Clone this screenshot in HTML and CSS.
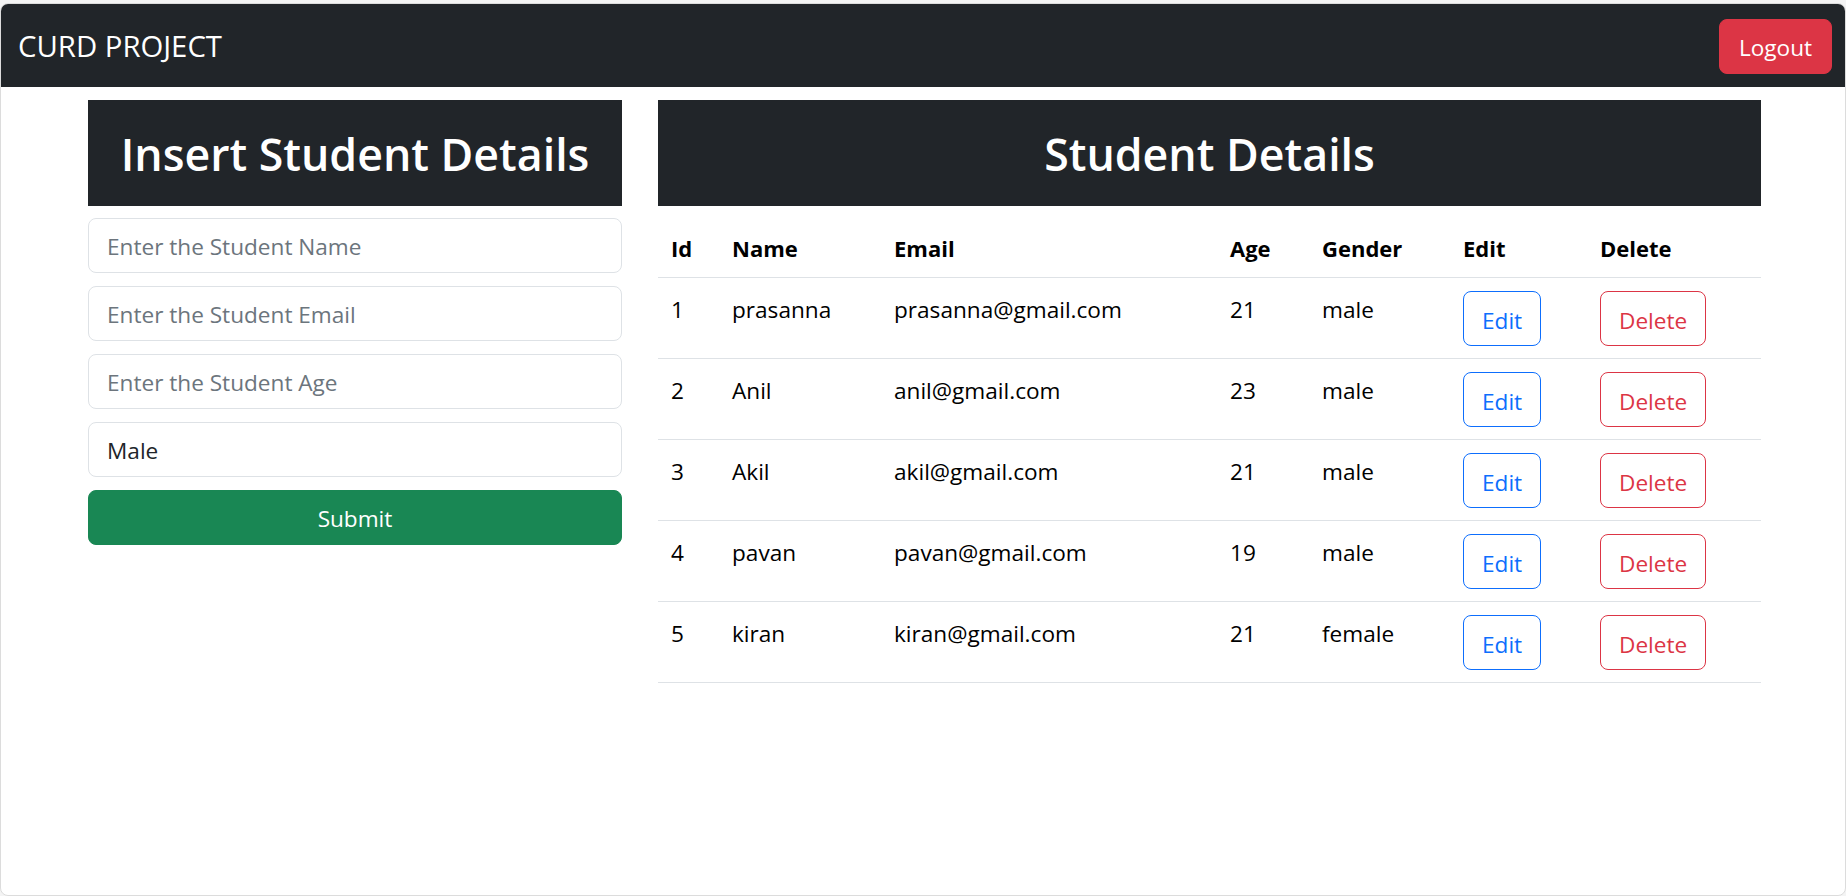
FILE: index.html
```html
<!DOCTYPE html>
<html lang="en">
<head>
<meta charset="utf-8">
<title>CURD PROJECT</title>
<link rel="stylesheet" href="styles.css">
</head>
<body>
<div class="window">
  <nav class="navbar">
    <span class="brand">CURD PROJECT</span>
    <button class="btn btn-logout" type="button">Logout</button>
  </nav>
  <main class="container">
    <section class="col-form">
      <h1 class="panel-title">Insert Student Details</h1>
      <form class="form">
        <input class="field" type="text" placeholder="Enter the Student Name">
        <input class="field" type="text" placeholder="Enter the Student Email">
        <input class="field" type="text" placeholder="Enter the Student Age">
        <select class="field field-select">
          <option>Male</option>
          <option>Female</option>
        </select>
        <button class="btn-submit" type="button">Submit</button>
      </form>
    </section>
    <section class="col-table">
      <h1 class="panel-title">Student Details</h1>
      <table class="table">
        <colgroup>
          <col class="w-id"><col class="w-name"><col class="w-email"><col class="w-age"><col class="w-gender"><col class="w-edit"><col class="w-delete">
        </colgroup>
        <thead>
          <tr><th>Id</th><th>Name</th><th>Email</th><th>Age</th><th>Gender</th><th>Edit</th><th>Delete</th></tr>
        </thead>
        <tbody>
          <tr><td>1</td><td>prasanna</td><td>prasanna@gmail.com</td><td>21</td><td>male</td><td><button class="btn btn-edit" type="button">Edit</button></td><td><button class="btn btn-delete" type="button">Delete</button></td></tr>
          <tr><td>2</td><td>Anil</td><td>anil@gmail.com</td><td>23</td><td>male</td><td><button class="btn btn-edit" type="button">Edit</button></td><td><button class="btn btn-delete" type="button">Delete</button></td></tr>
          <tr><td>3</td><td>Akil</td><td>akil@gmail.com</td><td>21</td><td>male</td><td><button class="btn btn-edit" type="button">Edit</button></td><td><button class="btn btn-delete" type="button">Delete</button></td></tr>
          <tr><td>4</td><td>pavan</td><td>pavan@gmail.com</td><td>19</td><td>male</td><td><button class="btn btn-edit" type="button">Edit</button></td><td><button class="btn btn-delete" type="button">Delete</button></td></tr>
          <tr><td>5</td><td>kiran</td><td>kiran@gmail.com</td><td>21</td><td>female</td><td><button class="btn btn-edit" type="button">Edit</button></td><td><button class="btn btn-delete" type="button">Delete</button></td></tr>
        </tbody>
      </table>
    </section>
  </main>
</div>
</body>
</html>
```

FILE: styles.css
```css
* { box-sizing: border-box; }

html, body {
  margin: 0;
  padding: 0;
  height: 100%;
}

body {
  background: #f4f4f4;
  font-family: "Open Sans", "Noto Sans", sans-serif;
  font-size: 22.6px;
  color: #212529;
  padding-top: 3px;
}

.window {
  height: 893px;
  background: #fff;
  border: 1px solid #dcdcdc;
  border-radius: 8px;
  overflow: hidden;
}

.navbar {
  height: 83px;
  background: #212529;
  display: flex;
  align-items: center;
  justify-content: space-between;
  padding: 1px 13px 0 17px;
}

.brand {
  color: #fff;
  font-size: 29.3px;
  line-height: 1;
  padding-top: 2px;
}

.btn {
  font-family: inherit;
  font-size: 22.6px;
  line-height: 33px;
  border-radius: 8px;
  border: 1px solid transparent;
  cursor: pointer;
  background: transparent;
}

.btn-logout {
  height: 55px;
  width: 113px;
  background: #dc3545;
  border-color: #dc3545;
  color: #fff;
  padding: 2px 0 0;
}

.container {
  width: 1673px;
  margin: 13px 0 0 87px;
  display: grid;
  grid-template-columns: 534px 1103px;
  column-gap: 36px;
  align-items: start;
}

.panel-title {
  margin: 0;
  height: 106px;
  background: #212529;
  color: #fff;
  font-size: 44.7px;
  font-weight: 600;
  white-space: nowrap;
  display: flex;
  align-items: center;
  justify-content: center;
}

.form {
  display: flex;
  flex-direction: column;
  gap: 13px;
  margin-top: 12px;
}

.field {
  display: block;
  width: 100%;
  height: 55px;
  border: 1px solid #dee2e6;
  border-radius: 8px;
  padding: 2px 18px 0;
  font-family: inherit;
  font-size: 22.6px;
  color: #212529;
  background: #fff;
  outline: none;
}

.field::placeholder {
  color: #6c757d;
  opacity: 1;
}

.field-select {
  appearance: none;
  -webkit-appearance: none;
}

.btn-submit {
  height: 55px;
  width: 100%;
  border: 1px solid #198754;
  border-radius: 8px;
  background: #198754;
  color: #fff;
  font-family: inherit;
  font-size: 22.6px;
  padding-top: 2px;
  cursor: pointer;
}

.table {
  width: 100%;
  margin-top: 13px;
  border-collapse: collapse;
  table-layout: fixed;
  vertical-align: top;
}

.w-id { width: 61px; }
.w-name { width: 162px; }
.w-email { width: 336px; }
.w-age { width: 92px; }
.w-gender { width: 141px; }
.w-edit { width: 137px; }
.w-delete { width: 174px; }

.table th,
.table td {
  text-align: left;
  padding: 12px 13px;
  line-height: 34px;
  border-bottom: 1px solid #dee2e6;
  vertical-align: top;
  color: #000;
}

.table th {
  font-weight: 700;
  font-size: 22px;
}

.table td {
  padding-top: 13px;
  padding-bottom: 12px;
  line-height: 38px;
}

.btn-edit,
.btn-delete {
  height: 55px;
  padding: 3px 18px 0;
  line-height: 33px;
  vertical-align: top;
}

.btn-edit {
  border-color: #0d6efd;
  color: #0d6efd;
}

.btn-delete {
  border-color: #dc3545;
  color: #dc3545;
}
```
